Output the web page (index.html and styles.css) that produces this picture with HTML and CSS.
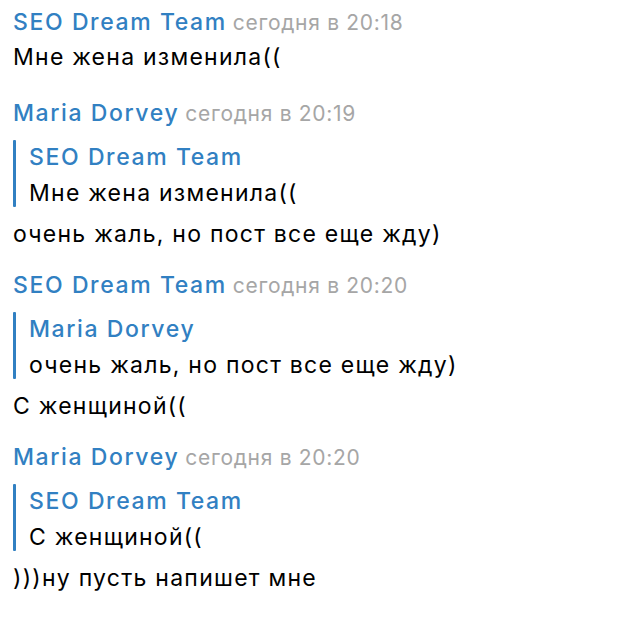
FILE: index.html
```html
<!DOCTYPE html>
<html lang="ru">
<head>
<meta charset="utf-8">
<link rel="stylesheet" href="styles.css">
</head>
<body>
<div class="chat">
  <div class="msg msg-plain">
    <div class="head"><span class="name">SEO Dream Team</span><span class="time">сегодня в 20:18</span></div>
    <div class="text">Мне жена изменила((</div>
  </div>
  <div class="msg">
    <div class="head"><span class="name">Maria Dorvey</span><span class="time">сегодня в 20:19</span></div>
    <div class="quote">
      <div class="qname">SEO Dream Team</div>
      <div class="qtext">Мне жена изменила((</div>
    </div>
    <div class="text">очень жаль, но пост все еще жду)</div>
  </div>
  <div class="msg">
    <div class="head"><span class="name">SEO Dream Team</span><span class="time">сегодня в 20:20</span></div>
    <div class="quote">
      <div class="qname">Maria Dorvey</div>
      <div class="qtext">очень жаль, но пост все еще жду)</div>
    </div>
    <div class="text">С женщиной((</div>
  </div>
  <div class="msg">
    <div class="head"><span class="name">Maria Dorvey</span><span class="time">сегодня в 20:20</span></div>
    <div class="quote">
      <div class="qname">SEO Dream Team</div>
      <div class="qtext">С женщиной((</div>
    </div>
    <div class="text">)))ну пусть напишет мне</div>
  </div>
</div>
</body>
</html>
```
FILE: styles.css
```css
html, body {
  margin: 0;
  padding: 0;
  background: #ffffff;
}
.chat {
  padding: 5.5px 0 0 13px;
  font-family: Inter, "Noto Sans", sans-serif;
  font-size: 23px;
  line-height: 36px;
  letter-spacing: 1.25px;
  color: #000;
  display: flex;
  flex-direction: column;
  gap: 16.5px;
}
.msg {
  display: flex;
  flex-direction: column;
}
.msg-plain {
  padding-bottom: 5.5px;
}
.head {
  display: flex;
  align-items: baseline;
  gap: 6px;
  line-height: 33px;
}
.name, .qname {
  color: #3180c2;
  font-weight: 500;
  letter-spacing: 1.6px;
}
.time {
  color: #a6a6a6;
  font-size: 21px;
  letter-spacing: 0.7px;
}
.quote {
  position: relative;
  margin: 9.5px 0 5px 0;
  padding-left: 16px;
}
.quote::before {
  content: "";
  position: absolute;
  left: 0;
  top: 1px;
  bottom: 4px;
  width: 3px;
  background: #3180c2;
  border-radius: 1px;
}
```
